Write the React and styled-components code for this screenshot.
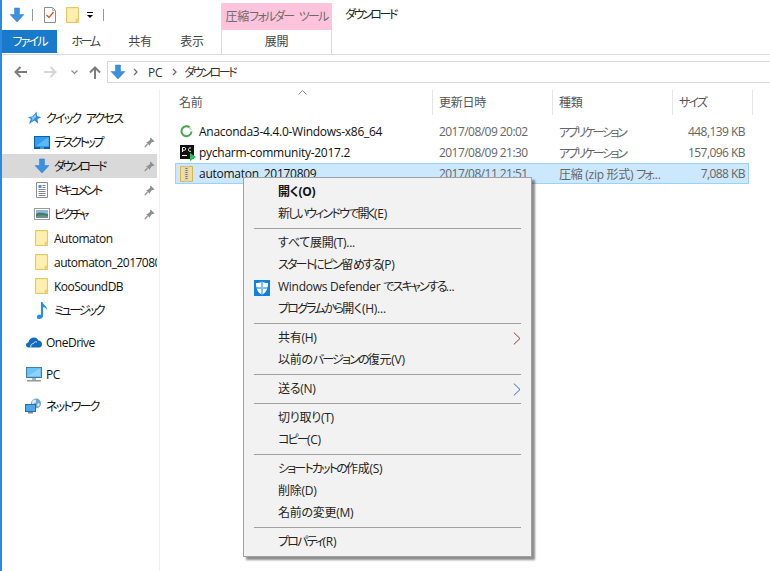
import React from 'react'
import styled, { createGlobalStyle } from 'styled-components'

const GlobalStyle = createGlobalStyle`
  html, body {
    margin: 0;
    padding: 0;
    background: #fff;
  }
  body {
    font-family: 'Open Sans', 'Noto Sans CJK JP', sans-serif;
    font-size: 12px;
    letter-spacing: -0.27px;
    font-feature-settings: 'palt';
    color: #1a1a1a;
  }
  * {
    box-sizing: border-box;
  }
`

// kana in the reference font runs much narrower than Noto, so runs of it get squeezed
const Jp = styled.span`
  letter-spacing: -1.8px;
  word-spacing: 4px;
`

const Tight = styled.span`
  letter-spacing: -2.4px;
`

const ArrowIcon = ({ size = 16 }) => (
  <svg width={size} height={size} viewBox='0 0 16 16'>
    <path d='M5.500 1h5v6.500H15L8 15 1 7.500h4.500z' fill='#3d8fe0' stroke='#2a7fd4' strokeWidth='.5' />
  </svg>
)

const FolderIcon = () => (
  <svg width='13' height='16' viewBox='0 0 13 16'>
    <path d='M.5.500h12v15H.5z' fill='#fde58f' stroke='#e8c765' />
    <path d='M1.500 1.500h10v13h-10z' fill='#ffefb0' />
    <path d='M10 15v-3h2.500v3z' fill='#f5d877' stroke='#e8c765' strokeWidth='.6' />
  </svg>
)

const NavArrow = ({ color, left }) => (
  <svg width='13' height='12' viewBox='0 0 13 12'>
    <path
      d={left ? 'M13 6H2M6.500 1 1.500 6l5 5' : 'M0 6h11M6.500 1l5 5-5 5'}
      fill='none'
      stroke={color}
      strokeWidth='2'
    />
  </svg>
)

const UpArrow = () => (
  <svg width='12' height='13' viewBox='0 0 12 13'>
    <path d='M6 13V2M1 6.500 6 1.500l5 5' fill='none' stroke='#7d7d7d' strokeWidth='2' />
  </svg>
)

const SmallChevron = ({ color = '#6f6f6f' }) => (
  <svg width='5' height='8' viewBox='0 0 5 8'>
    <path d='M1 1l3 3-3 3' fill='none' stroke={color} strokeWidth='1.300' />
  </svg>
)

const PinIcon = () => (
  <svg width='11' height='11' viewBox='0 0 11 11'>
    <path d='M6.500.500 10.500 4.500 9.500 5 8 5 6 7.500 6 9 2 5 3.500 5 6 3 6 1.500z' fill='#8a8f94' />
    <path d='M3.500 7 .8 10.200' stroke='#8a8f94' strokeWidth='1.200' />
  </svg>
)

const StarIcon = () => (
  <svg width='15' height='14' viewBox='0 0 15 14'>
    <path d='M9.500.500 10 5l4.500 1.200L10.500 8l.5 4.800L7.500 9.500 2 13l1.800-5L.8 6l4.700-.5z' fill='#2b8ae2' />
    <path d='M8.800 3 9 6l-3 3-1.500 1.500L5.500 7.500 3.500 6.500 6 6z' fill='#8ec6f5' />
  </svg>
)

const DesktopIcon = () => (
  <svg width='16' height='13' viewBox='0 0 16 13'>
    <rect x='.5' y='.5' width='15' height='11' fill='#2f9cf0' stroke='#0f5fa8' />
    <path d='M2 10 13 2h1.500v8z' fill='#5db8f6' />
    <path d='M0 11h16v2H0z' fill='#0f5fa8' />
    <path d='M6 11.500h4v1H6z' fill='#8ecbf5' />
  </svg>
)

const DocumentIcon = () => (
  <svg width='12' height='16' viewBox='0 0 12 16'>
    <path d='M.5.500h11v15H.5z' fill='#fff' stroke='#8d8d8d' />
    <path d='M2.500 3h3v3h-3z' fill='#4a90d9' />
    <path d='M6.500 3.500h3M6.500 5.500h3M2.500 7.500h7M2.500 9.500h7M2.500 11.500h7M2.500 13.500h7' stroke='#7a8792' />
  </svg>
)

const DocumentCheck = () => (
  <svg width='12' height='16' viewBox='0 0 12 16'>
    <path d='M.5.500h8l3 3v12H.5z' fill='#fff' stroke='#8d8d8d' />
    <path d='M8.500.500v3h3' fill='none' stroke='#b5b5b5' />
    <path d='M2.500 8 5 10.500 9.500 5' fill='none' stroke='#e2572b' strokeWidth='1.400' />
  </svg>
)

const PictureIcon = () => (
  <svg width='16' height='12' viewBox='0 0 16 12'>
    <rect x='.5' y='.5' width='15' height='11' fill='#fff' stroke='#9a9a9a' />
    <path d='M2 2h12v4H2z' fill='#8fb7dc' />
    <path d='M2 6c3-2 6-1 12 0v4H2z' fill='#3f7c6b' />
    <path d='M2 8c4-1 8-1 12 0v2H2z' fill='#6e8f92' />
  </svg>
)

const MusicIcon = () => (
  <svg width='12' height='17' viewBox='0 0 12 17'>
    <path d='M5 0h1.500c.5 3 5 4 4.500 8-1-2-2.500-3-4-3v9c0 2-2 3-4 3s-2.500-1.500-2-2.500C1 13 3 12.500 5 13z' fill='#1e90e6' />
  </svg>
)

const CloudIcon = () => (
  <svg width='16' height='11' viewBox='0 0 16 11'>
    <path d='M3 10.500C1 10.500 0 9.500 0 8s1-2.500 2.300-2.500C3 2 5.500.500 8 .500c2 0 3.500 1 4.300 3 2 0 3.700 1.500 3.700 3.500s-1 3.500-3 3.500z' fill='#0f6cbd' />
    <path d='M5 10.500c-1-2 .5-4 2.500-4 .5-1.500 2-2 3.500-1.500' fill='none' stroke='#fff' strokeWidth='.8' />
  </svg>
)

const MonitorIcon = () => (
  <svg width='16' height='15' viewBox='0 0 16 15'>
    <rect x='.5' y='.5' width='15' height='10' fill='#6cc3f5' stroke='#3f7fa8' />
    <path d='M2 9 13 2h1v7z' fill='#8fd4f8' />
    <path d='M6 11h4v2H6z' fill='#a9b4bc' />
    <path d='M1 13h14v1.500H1z' fill='#8d9aa3' />
  </svg>
)

const NetworkIcon = () => (
  <svg width='17' height='16' viewBox='0 0 17 16'>
    <circle cx='11' cy='5.500' r='5' fill='#6fa4cf' />
    <path d='M8 2c2-1 4 0 3 2s-3 1-3 3-2-3 0-5zM13 5c2 0 2 2 1 3s-3 0-1-3z' fill='#dfe8ee' />
    <rect x='.5' y='6.500' width='10' height='7' fill='#4da8ea' stroke='#2c6f9f' />
    <path d='M3 14h5v1.500H3z' fill='#7d8b95' />
  </svg>
)

const AnacondaIcon = () => (
  <svg width='13' height='13' viewBox='0 0 13 13'>
    <path d='M9.800 2.400A5 5 0 1 0 11.500 6.500' fill='none' stroke='#46a74e' strokeWidth='2' />
    <path d='M9.500 2.300 11.500 5' stroke='#b9dcbb' strokeWidth='1.600' />
  </svg>
)

const PycharmIcon = () => (
  <svg width='16' height='16' viewBox='0 0 16 16'>
    <rect width='14' height='14' fill='#111' />
    <path d='M2.500 7V2.500h2c1.600 0 1.600 2.700 0 2.700h-2M11 3c-3-1-3.800 4.200 0 3.300' fill='none' stroke='#fff' strokeWidth='1' />
    <path d='M2 10.500h5' stroke='#fff' />
    <path d='M10 8l6 4-6 4z' fill='#21c45d' />
  </svg>
)

const ZipIcon = () => (
  <svg width='13' height='16' viewBox='0 0 13 16'>
    <path d='M.5.500h12v15H.5z' fill='#fbdc87' stroke='#d9b455' />
    <path d='M4.500 .500h4v15h-4z' fill='#cfd3d6' />
    <path d='M5.500 2h2v1h-2zM5.500 4h2v1h-2zM5.500 6h2v1h-2zM5.500 8h2v1h-2zM5.500 10h2v1h-2zM5.500 12h2v1h-2z' fill='#6d7378' />
  </svg>
)

const ShieldIcon = () => (
  <svg width='16' height='16' viewBox='0 0 16 16'>
    <rect width='16' height='16' fill='#0f80dc' />
    <path d='M8 1.500c1.500 1 4 1.500 6 1.500 0 5.500-1.500 9.500-6 11.500C3.500 12.500 2 8.500 2 3c2 0 4.500-.5 6-1.500z' fill='#fff' />
    <path d='M7.500 1.500v13h1v-13zM2 7.500h12v1H2z' fill='#0f80dc' />
  </svg>
)

const MenuArrow = ({ color }) => (
  <svg width='8' height='13' viewBox='0 0 8 13'>
    <path d='M.8.500 7 6.500.8 12.500' fill='none' stroke={color} strokeWidth='1' />
  </svg>
)

const Window = styled.div`
  position: relative;
  width: 770px;
  height: 571px;
  overflow: hidden;
  background: #fff;
  border-left: 2px solid #2a8ae0;
`

const TitleBar = styled.div`
  display: flex;
  height: 30px;
  align-items: center;
  white-space: nowrap;
`

const QuickAccess = styled.div`
  display: flex;
  align-items: center;
  width: 219px;
  padding: 0 0 0 7px;
  height: 30px;
`

const BarSep = styled.span`
  width: 1px;
  height: 12px;
  background: #9a9a9a;
  margin: ${(p) => p.$margin};
`

const QuickGap = styled.span`
  width: 10px;
`

const DropGlyph = styled.span`
  display: flex;
  flex-direction: column;
  gap: 2px;
  align-items: center;
  margin-left: 8px;
  &::before {
    content: '';
    width: 6px;
    height: 1px;
    background: #000;
  }
  &::after {
    content: '';
    border-left: 3px solid transparent;
    border-right: 3px solid transparent;
    border-top: 3px solid #000;
  }
`

const ToolTitle = styled.div`
  align-self: flex-end;
  width: 111px;
  height: 27px;
  background: #ffc4dc;
  color: #6b6b6b;
  text-align: center;
  line-height: 27px;
`

const WindowTitle = styled.div`
  margin-left: 13px;
  margin-top: -3px;
  color: #222;
`

const TabRow = styled.div`
  display: flex;
  height: 25px;
  border-bottom: 1px solid #dadbdc;
`

const FileTab = styled.div`
  width: 55px;
  height: 23px;
  background: #1979ca;
  color: #fff;
  text-align: center;
  line-height: 23px;
`

const Tab = styled.div`
  width: ${(p) => p.$width}px;
  height: 23px;
  line-height: 23px;
  text-align: center;
  color: #444;
`

const ToolTab = styled(Tab)`
  margin-left: 4px;
  border-left: 1px solid #dadbdc;
  border-right: 1px solid #dadbdc;
  height: 24px;
`

const AddressRow = styled.div`
  display: flex;
  align-items: center;
  height: 34px;
  padding-left: 12px;
`

const NavButton = styled.span`
  display: flex;
  width: ${(p) => p.$width}px;
`

const TinyDown = styled.svg`
  width: 7px;
  height: 5px;
`

const AddressBox = styled.div`
  display: flex;
  align-items: center;
  flex: 1;
  height: 22px;
  padding-left: 2px;
  border: 1px solid #d9d9d9;
  border-right: 0;
  color: #333;
`

const Crumb = styled.span`
  display: flex;
  margin: 0 ${(p) => p.$gap}px;
`

const Content = styled.div`
  display: flex;
  height: 483px;
`

const Sidebar = styled.nav`
  width: 158px;
  padding-top: 17px;
  border-right: 1px solid #f0f0f0;
  margin-right: 15px;
  flex-shrink: 0;
`

const NavRow = styled.div`
  display: flex;
  align-items: center;
  height: 24px;
  width: 155px;
  padding-left: ${(p) => p.$indent}px;
  margin-top: ${(p) => p.$gap || 0}px;
  background: ${(p) => (p.$active ? '#d9d9d9' : 'transparent')};
  color: #111;
  white-space: nowrap;
  overflow: hidden;
`

const NavIcon = styled.span`
  display: flex;
  width: ${(p) => p.$width || 21}px;
  flex-shrink: 0;
  justify-content: center;
  padding-right: 4px;
`

const NavLabel = styled.span`
  flex: 1;
  overflow: hidden;
  letter-spacing: -0.5px;
`

const Pin = styled.span`
  display: flex;
  width: 13px;
  flex-shrink: 0;
`

const Main = styled.main`
  flex: 1;
  position: relative;
`

const HeaderRow = styled.div`
  position: relative;
  display: grid;
  grid-template-columns: 258px 120px 120px 80px;
  height: 25px;
  margin-top: 1px;
  color: #4c607a;
`

const SortMark = styled.svg`
  position: absolute;
  left: 123px;
  top: 0;
  width: 9px;
  height: 5px;
`

const HeaderCell = styled.div`
  padding-left: ${(p) => p.$pad}px;
  line-height: 25px;
  border-right: 1px solid #e5e5e5;
  color: #555;
`

const FileList = styled.div`
  display: flex;
  flex-direction: column;
  margin-top: 6px;
`

const FileRow = styled.div`
  display: grid;
  grid-template-columns: 258px 120px 120px 76px;
  width: 574px;
  height: 21px;
  align-items: center;
  white-space: nowrap;
  background: ${(p) => (p.$selected ? '#cce8ff' : 'transparent')};
  outline: ${(p) => (p.$selected ? '1px solid #99d1ff' : 'none')};
  outline-offset: -1px;
`

const NameCell = styled.div`
  display: flex;
  align-items: center;
  color: #111;
`

const FileIcon = styled.span`
  display: flex;
  width: 24px;
  padding-left: 5px;
`

const DateCell = styled.div`
  padding-left: 6px;
  letter-spacing: -0.55px;
  color: #666;
`

const TypeCell = styled.div`
  padding-left: 6px;
  color: #666;
`

const SizeCell = styled.div`
  padding-right: 4px;
  text-align: right;
  letter-spacing: -0.55px;
  color: #666;
`

const ContextMenu = styled.div`
  position: absolute;
  left: 241px;
  top: 177px;
  width: 289px;
  height: 380px;
  padding: 3px 0 0;
  background: #f2f2f2;
  border: 1px solid #a0a0a0;
  box-shadow: 3px 3px 2px rgba(0, 0, 0, 0.45);
  color: #222;
`

const MenuItem = styled.div`
  position: relative;
  height: 22px;
  line-height: 22px;
  padding-left: 34px;
  font-weight: ${(p) => (p.$bold ? 700 : 400)};
  color: ${(p) => (p.$bold ? '#111' : '#222')};
`

const MenuIcon = styled.span`
  position: absolute;
  left: 10px;
  top: 4px;
  display: flex;
`

const MenuChevron = styled.span`
  position: absolute;
  right: 10px;
  top: 5px;
  display: flex;
`

const MenuSep = styled.div`
  height: 1px;
  margin: 3px 10px;
  background: #a0a0a0;
`

const quickItems = [
  { label: <Tight>デスクトップ</Tight>, id: 'desktop', icon: <DesktopIcon />, pin: true },
  { label: <Tight>ダウンロード</Tight>, id: 'downloads', icon: <ArrowIcon />, pin: true, active: true },
  { label: <Tight>ドキュメント</Tight>, id: 'documents', icon: <DocumentIcon />, pin: true },
  { label: <Tight>ピクチャ</Tight>, id: 'pictures', icon: <PictureIcon />, pin: true },
  { label: 'Automaton', id: 'automaton', icon: <FolderIcon /> },
  { label: 'automaton_20170809', id: 'automaton2', icon: <FolderIcon /> },
  { label: 'KooSoundDB', id: 'koo', icon: <FolderIcon /> },
  { label: <Tight>ミュージック</Tight>, id: 'music', icon: <MusicIcon /> },
]

const files = [
  { name: 'Anaconda3-4.4.0-Windows-x86_64', icon: <AnacondaIcon />, date: '2017/08/09 20:02', type: <Tight>アプリケーション</Tight>, size: '448,139 KB' },
  { name: 'pycharm-community-2017.2', icon: <PycharmIcon />, date: '2017/08/09 21:30', type: <Tight>アプリケーション</Tight>, size: '157,096 KB' },
  { name: 'automaton_20170809', icon: <ZipIcon />, date: '2017/08/11 21:51', type: <>圧縮 (zip 形式) <Jp>フォ</Jp>...</>, size: '7,088 KB', selected: true },
]

const App = () => {
  return (
    <Window>
      <GlobalStyle />
      <TitleBar>
        <QuickAccess>
          <ArrowIcon />
          <BarSep $margin='0 11px 0 7px' />
          <DocumentCheck />
          <QuickGap />
          <FolderIcon />
          <DropGlyph />
          <BarSep $margin='0 0 0 10px' />
        </QuickAccess>
        <ToolTitle>圧縮<Jp>フォルダー ツール</Jp></ToolTitle>
        <WindowTitle><Tight>ダウンロード</Tight></WindowTitle>
      </TitleBar>
      <TabRow>
        <FileTab><Jp>ファイル</Jp></FileTab>
        <Tab $width={56}><Tight>ホーム</Tight></Tab>
        <Tab $width={54}>共有</Tab>
        <Tab $width={50}>表示</Tab>
        <ToolTab $width={111}>展開</ToolTab>
      </TabRow>
      <AddressRow>
        <NavButton $width={30}>
          <NavArrow color='#7d7d7d' left />
        </NavButton>
        <NavButton $width={27}>
          <NavArrow color='#d5d5d5' />
        </NavButton>
        <NavButton $width={18}>
          <TinyDown viewBox='0 0 7 5'>
            <path d='M.5.500 3.500 3.500 6.500.500' fill='none' stroke='#8a8a8a' strokeWidth='1.200' />
          </TinyDown>
        </NavButton>
        <NavButton $width={18}>
          <UpArrow />
        </NavButton>
        <AddressBox>
          <ArrowIcon />
          <Crumb $gap={7}>
            <SmallChevron />
          </Crumb>
          <Crumb $gap={3}>PC</Crumb>
          <Crumb $gap={7}>
            <SmallChevron />
          </Crumb>
          <span><Tight>ダウンロード</Tight></span>
        </AddressBox>
      </AddressRow>
      <Content>
        <Sidebar>
          <NavRow $indent={25}>
            <NavIcon $width={19}>
              <StarIcon />
            </NavIcon>
            <NavLabel><Jp>クイック アクセス</Jp></NavLabel>
          </NavRow>
          {quickItems.map((item) => (
            <NavRow key={item.id} $indent={31} $active={item.active}>
              <NavIcon>{item.icon}</NavIcon>
              <NavLabel>{item.label}</NavLabel>
              {item.pin && (
                <Pin>
                  <PinIcon />
                </Pin>
              )}
            </NavRow>
          ))}
          <NavRow $indent={23} $gap={8}>
            <NavIcon>
              <CloudIcon />
            </NavIcon>
            <NavLabel>OneDrive</NavLabel>
          </NavRow>
          <NavRow $indent={23} $gap={8}>
            <NavIcon>
              <MonitorIcon />
            </NavIcon>
            <NavLabel>PC</NavLabel>
          </NavRow>
          <NavRow $indent={23} $gap={8}>
            <NavIcon>
              <NetworkIcon />
            </NavIcon>
            <NavLabel><Jp>ネットワーク</Jp></NavLabel>
          </NavRow>
        </Sidebar>
        <Main>
          <HeaderRow>
            <SortMark viewBox='0 0 9 5'>
              <path d='M.5 4.500 4.500.500l4 4' fill='none' stroke='#8a8a8a' />
            </SortMark>
            <HeaderCell $pad={4}>名前</HeaderCell>
            <HeaderCell $pad={6}>更新日時</HeaderCell>
            <HeaderCell $pad={6}>種類</HeaderCell>
            <HeaderCell $pad={6}><Jp>サイズ</Jp></HeaderCell>
          </HeaderRow>
          <FileList>
            {files.map((file) => (
              <FileRow key={file.name} $selected={file.selected}>
                <NameCell>
                  <FileIcon>{file.icon}</FileIcon>
                  {file.name}
                </NameCell>
                <DateCell>{file.date}</DateCell>
                <TypeCell>{file.type}</TypeCell>
                <SizeCell>{file.size}</SizeCell>
              </FileRow>
            ))}
          </FileList>
        </Main>
      </Content>
      <ContextMenu>
        <MenuItem $bold>開く(O)</MenuItem>
        <MenuItem><Jp>新しいウィンドウで開く</Jp>(E)</MenuItem>
        <MenuSep />
        <MenuItem>すべて展開(T)...</MenuItem>
        <MenuItem><Jp>スタートにピン</Jp>留<Jp>めする</Jp>(P)</MenuItem>
        <MenuItem>
          <MenuIcon>
            <ShieldIcon />
          </MenuIcon>
          Windows Defender <Jp>でスキャンする</Jp>...
        </MenuItem>
        <MenuItem><Jp>プログラムから</Jp>開く(H)...</MenuItem>
        <MenuSep />
        <MenuItem>
          共有(H)
          <MenuChevron>
            <MenuArrow color='#8c3a3a' />
          </MenuChevron>
        </MenuItem>
        <MenuItem>以前の<Jp>バージョンの</Jp>復元(V)</MenuItem>
        <MenuSep />
        <MenuItem>
          送る(N)
          <MenuChevron>
            <MenuArrow color='#2f6fa8' />
          </MenuChevron>
        </MenuItem>
        <MenuSep />
        <MenuItem>切り取り(T)</MenuItem>
        <MenuItem><Jp>コピー</Jp>(C)</MenuItem>
        <MenuSep />
        <MenuItem><Jp>ショートカットの</Jp>作成(S)</MenuItem>
        <MenuItem>削除(D)</MenuItem>
        <MenuItem>名前の変更(M)</MenuItem>
        <MenuSep />
        <MenuItem><Jp>プロパティ</Jp>(R)</MenuItem>
      </ContextMenu>
    </Window>
  )
}

export default App
